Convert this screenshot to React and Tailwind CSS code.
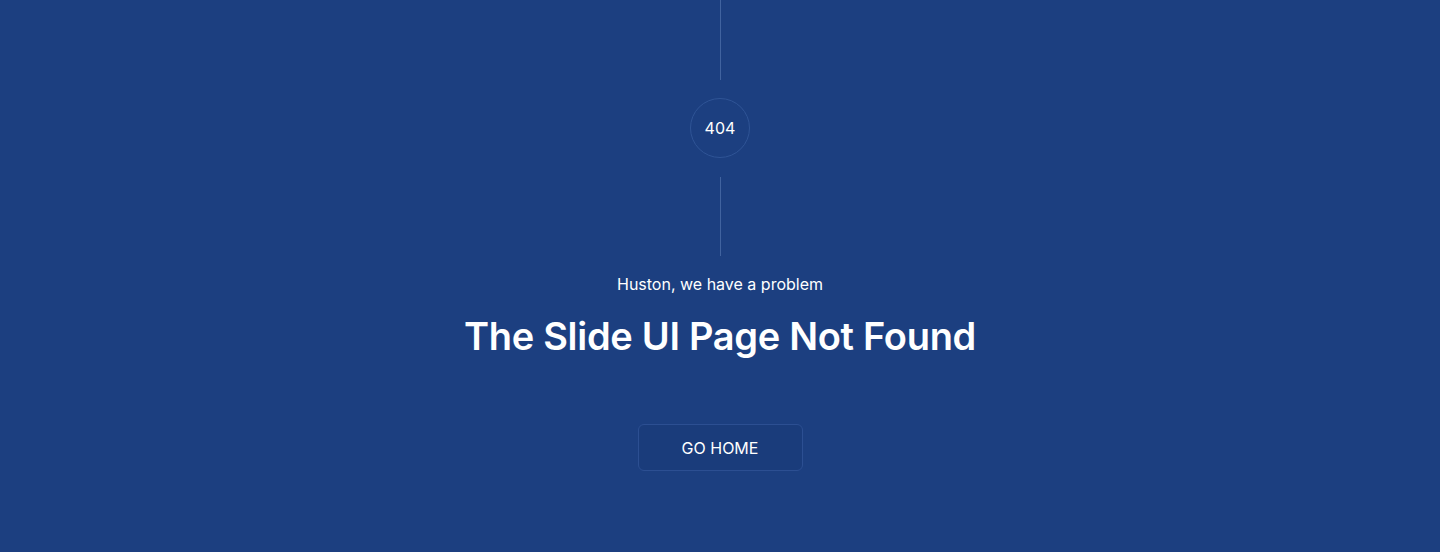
export default function App() {
  return (
    <div className="w-full h-[552px] bg-[#1c3f80] flex flex-col items-center text-white" style={{ fontFamily: "Inter, 'Noto Sans', sans-serif" }}>
      <div className="w-px h-[80px] bg-[#41639f]" />
      <div className="mt-[18px] w-[60px] h-[60px] rounded-full border border-[#2f5496] flex items-center justify-center text-[16px] font-normal">404</div>
      <div className="mt-[19px] w-px h-[79px] bg-[#41639f]" />
      <p className="mt-[18px] text-[16px] leading-[20px] text-white">Huston, we have a problem</p>
      <h1 className="mt-[19px] text-[38px] leading-[46px] font-semibold tracking-[-0.3px]">The Slide UI Page Not Found</h1>
      <button className="mt-[65px] w-[165px] h-[47px] rounded-md border border-[#2c4f92] bg-[#1a3c7b] text-[16px] font-normal">GO HOME</button>
    </div>
  );
}
